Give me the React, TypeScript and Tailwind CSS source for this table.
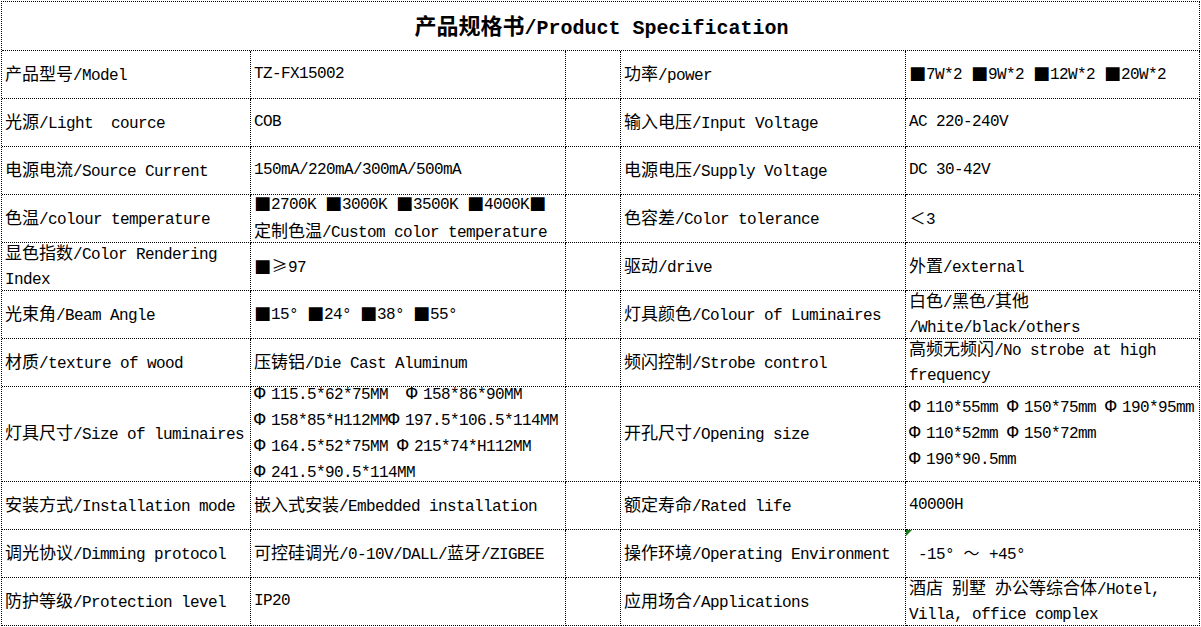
import React from 'react';

type Cell = string | string[];
type Row = { h: string; a: Cell; b: Cell; c: Cell; d: Cell; mark?: boolean };

const rows: Row[] = [
  { h: 'h-[48px]', a: '产品型号/Model', b: 'TZ-FX15002', c: '功率/power', d: '■7W*2 ■9W*2 ■12W*2 ■20W*2' },
  { h: 'h-[48px]', a: '光源/Light  cource', b: 'COB', c: '输入电压/Input Voltage', d: 'AC 220-240V' },
  { h: 'h-[48px]', a: '电源电流/Source Current', b: '150mA/220mA/300mA/500mA', c: '电源电压/Supply Voltage', d: 'DC 30-42V' },
  {
    h: 'h-[48px]',
    a: '色温/colour temperature',
    b: ['■2700K ■3000K ■3500K ■4000K■', '定制色温/Custom color temperature'],
    c: '色容差/Color tolerance',
    d: '＜3',
  },
  { h: 'h-[48px]', a: ['显色指数/Color Rendering', 'Index'], b: '■≥97', c: '驱动/drive', d: '外置/external' },
  {
    h: 'h-[48px]',
    a: '光束角/Beam Angle',
    b: '■15° ■24° ■38° ■55°',
    c: '灯具颜色/Colour of Luminaires',
    d: ['白色/黑色/其他', '/White/black/others'],
  },
  {
    h: 'h-[48px]',
    a: '材质/texture of wood',
    b: '压铸铝/Die Cast Aluminum',
    c: '频闪控制/Strobe control',
    d: ['高频无频闪/No strobe at high', 'frequency'],
  },
  {
    h: 'h-[95px]',
    a: '灯具尺寸/Size of luminaires',
    b: ['Φ115.5*62*75MM  Φ158*86*90MM', 'Φ158*85*H112MMΦ197.5*106.5*114MM', 'Φ164.5*52*75MM Φ215*74*H112MM', 'Φ241.5*90.5*114MM'],
    c: '开孔尺寸/Opening size',
    d: ['Φ110*55mm Φ150*75mm Φ190*95mm', 'Φ110*52mm Φ150*72mm', 'Φ190*90.5mm'],
  },
  { h: 'h-[48px]', a: '安装方式/Installation mode', b: '嵌入式安装/Embedded installation', c: '额定寿命/Rated life', d: '40000H' },
  {
    h: 'h-[48px]',
    a: '调光协议/Dimming protocol',
    b: '可控硅调光/0-10V/DALL/蓝牙/ZIGBEE',
    c: '操作环境/Operating Environment',
    d: ' -15° ～ +45°',
    mark: true,
  },
  {
    h: 'h-[48px]',
    a: '防护等级/Protection level',
    b: 'IP20',
    c: '应用场合/Applications',
    d: ['酒店 别墅 办公等综合体/Hotel,', 'Villa, office complex'],
  },
];

const SYM = /[■Φ≥＜～]/;
const CJK = /[\u3000-\u303f\u3400-\u9fff\uff00-\uffef]/;

// SimSun-ish: half-width latin, full-width ideographs and symbols
function Txt({ s, title }: { s: string; title?: boolean }) {
  const parts: { k: 'l' | 'c' | 's'; t: string }[] = [];
  for (const ch of s) {
    const k = SYM.test(ch) ? 's' : CJK.test(ch) ? 'c' : 'l';
    const last = parts[parts.length - 1];
    if (last && last.k === k && k !== 's') last.t += ch;
    else parts.push({ k, t: ch });
  }
  return (
    <>
      {parts.map((p, i) => {
        if (p.k === 'c')
          return (
            <span key={i} className={title ? "font-['Noto_Sans_CJK_SC',sans-serif] text-[22px]" : "font-['Noto_Sans_CJK_SC',sans-serif] text-[17px]"}>
              {p.t}
            </span>
          );
        if (p.k === 's') {
          if (p.t === '■')
            return (
              <span key={i} className="inline-block w-[17px] font-['DejaVu_Sans',sans-serif] text-[18px]">
                ■
              </span>
            );
          if (p.t === 'Φ')
            return (
              <span key={i} className="inline-block w-[17px] text-[19px]">
                Φ
              </span>
            );
          return (
            <span key={i} className="inline-block w-[17px] text-center font-['Noto_Sans_CJK_SC',sans-serif] text-[16px]">
              {p.t}
            </span>
          );
        }
        return (
          <span key={i} className={title ? '' : 'text-[16px] tracking-[-0.6px]'}>
            {p.t}
          </span>
        );
      })}
    </>
  );
}

function Content({ v }: { v: Cell }) {
  const lines = Array.isArray(v) ? v : [v];
  return (
    <div className="flex flex-col">
      {lines.map((l, i) => (
        <div key={i} className="whitespace-pre">
          <Txt s={l} />
        </div>
      ))}
    </div>
  );
}

const cell = 'flex items-center pl-[3px] border-r border-b border-dotted border-black overflow-visible';

export default function App() {
  return (
    <div className="min-h-[627px] bg-white pl-px pt-px text-black font-['Liberation_Mono',monospace] text-[15px] leading-[24px]">
      <div className="grid w-fit grid-cols-[249px_315px_55px_285px_294px] border-l border-t border-dotted border-black">
        <div className="col-span-5 flex h-[49px] items-center justify-center border-r border-b border-dotted border-black pl-[2px] font-bold text-[20px] whitespace-pre">
          <span>
            <Txt s="产品规格书/Product Specification" title />
          </span>
        </div>
        {rows.map((r, i) => (
          <React.Fragment key={i}>
            <div className={`${cell} ${r.h}`}>
              <Content v={r.a} />
            </div>
            <div className={`${cell} ${r.h}`}>
              <Content v={r.b} />
            </div>
            <div className={`${cell} ${r.h}`} />
            <div className={`${cell} ${r.h}`}>
              <Content v={r.c} />
            </div>
            <div className={`${cell} ${r.h} relative`}>
              {r.mark && (
                <svg className="absolute left-0 top-0" width="6" height="6" viewBox="0 0 6 6">
                  <polygon points="0,0 6,0 0,6" fill="#1b7a1b" />
                </svg>
              )}
              <Content v={r.d} />
            </div>
          </React.Fragment>
        ))}
      </div>
    </div>
  );
}
